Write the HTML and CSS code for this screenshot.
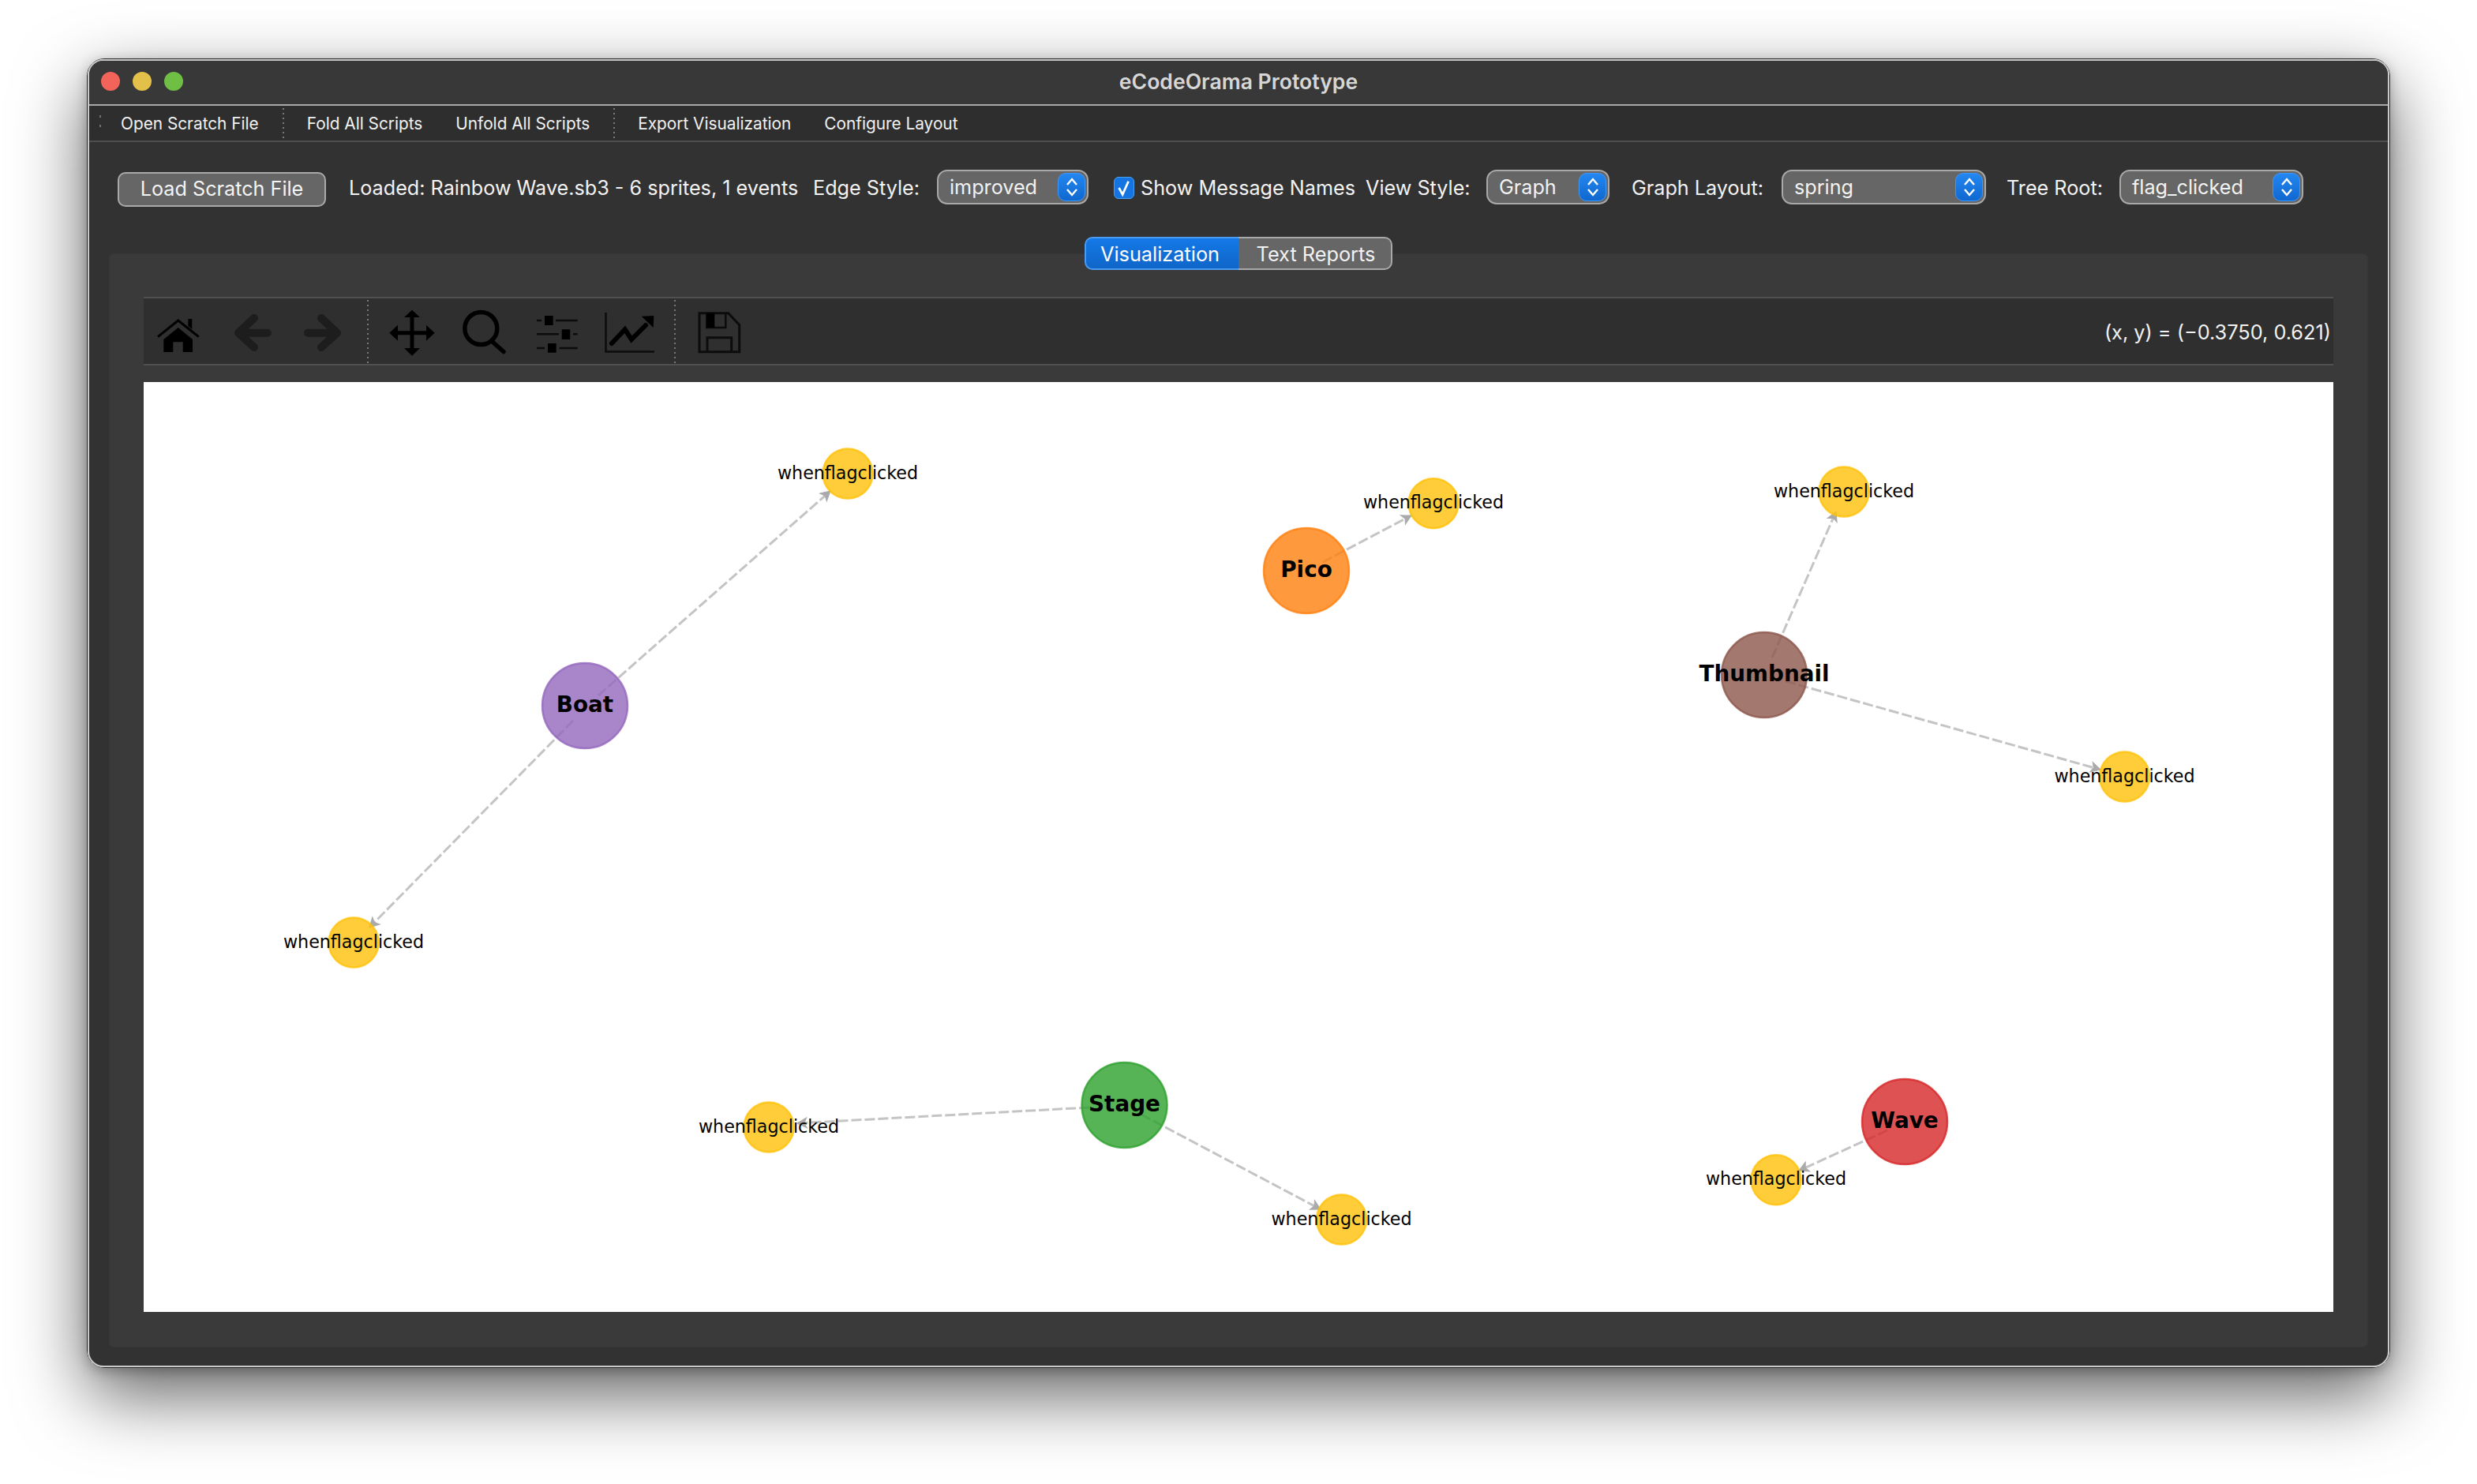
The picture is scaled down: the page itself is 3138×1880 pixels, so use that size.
FILE: index.html
```html
<!DOCTYPE html>
<html lang="en">
<head>
<meta charset="utf-8">
<title>eCodeOrama Prototype</title>
<link rel="stylesheet" href="styles.css">
</head>
<body>
<div class="window">
  <div class="frame">
    <header class="titlebar">
      <div class="lights"><i class="light red"></i><i class="light yellow"></i><i class="light green"></i></div>
      <div class="title">eCodeOrama Prototype</div>
    </header>
    <nav class="menubar">
      <span class="grip"></span>
      <span class="menu-item m-open">Open Scratch File</span>
      <span class="dots m-sep"></span>
      <span class="menu-item">Fold All Scripts</span>
      <span class="menu-item">Unfold All Scripts</span>
      <span class="dots m-sep"></span>
      <span class="menu-item">Export Visualization</span>
      <span class="menu-item">Configure Layout</span>
    </nav>
    <section class="controls">
      <button class="btn">Load Scratch File</button>
      <span class="lbl l-loaded">Loaded: Rainbow Wave.sb3 - 6 sprites, 1 events</span>
      <span class="lbl l-edge">Edge Style:</span>
      <div class="combo c-edge"><span>improved</span><b class="stepper"><svg viewBox="0 0 20 30"><path d="M4 12 10 5l6 7M4 18l6 7 6-7"/></svg></b></div>
      <span class="check"><svg viewBox="0 0 26 28"><path d="M6 14l5 9 8-18"/></svg></span>
      <span class="lbl l-show">Show Message Names</span>
      <span class="lbl l-view">View Style:</span>
      <div class="combo c-view"><span>Graph</span><b class="stepper"><svg viewBox="0 0 20 30"><path d="M4 12 10 5l6 7M4 18l6 7 6-7"/></svg></b></div>
      <span class="lbl l-layout">Graph Layout:</span>
      <div class="combo c-layout"><span>spring</span><b class="stepper"><svg viewBox="0 0 20 30"><path d="M4 12 10 5l6 7M4 18l6 7 6-7"/></svg></b></div>
      <span class="lbl l-root">Tree Root:</span>
      <div class="combo c-root"><span>flag_clicked</span><b class="stepper"><svg viewBox="0 0 20 30"><path d="M4 12 10 5l6 7M4 18l6 7 6-7"/></svg></b></div>
    </section>
    <main class="panel">
      <div class="tabs"><span class="tab active">Visualization</span><span class="tab">Text Reports</span></div>
      <div class="plot-toolbar">
        <svg class="ico i-home" viewBox="0 0 60 60"><path class="ln" d="M4 36.7 29.7 16l26 20.7"/><path d="M42.3 14h5v13l-5-4zM11.3 40 29.7 25 48 40v16H35.7V43.3H23.3V56H11.3z"/></svg>
        <svg class="ico dim i-back" viewBox="0 0 60 60"><path class="thick" d="M48.8 31.7H12M32 13 12 31.7 32 50"/></svg>
        <svg class="ico dim i-fwd" viewBox="0 0 60 60"><path class="thick" d="M11 31.7H48M28 13 48 31.7 28 50"/></svg>
        <span class="dots t-sep"></span>
        <svg class="ico i-move" viewBox="0 0 60 60"><path d="M27.5 12H32.5V29.2H48V21.7L58.7 31.7 48 41.7V34.2H32.5V51H40L30 60.7 20 51H27.5V34.2H12V41.7L1.3 31.7 12 21.7V29.2H27.5V12H20L30 2.7 40 12H27.5z"/></svg>
        <svg class="ico i-gap" viewBox="0 0 60 60"><circle class="ln w5" cx="25.3" cy="26" r="20.5"/><path class="ln w5" d="M41 44 54 55.5"/></svg>
        <svg class="ico i-gap" viewBox="0 0 60 60"><path class="ln w2" d="M4 16h6M28 16h27.7M4 33.3h28M50 33.3h5.7M4 51h10M32.5 51h23.2"/><path d="M14 10h10.7v12H14zM35.7 27.3h10.6V40H35.7zM18 45h10.7v11.7H18z"/></svg>
        <svg class="ico i-gap" viewBox="0 0 60 60"><path class="ln w2" d="M-.5 6V55.5H61"/><path class="ln w6" d="M7 45 23.7 27.3 32 40 50 22"/><path d="M60.3 10 44.7 10.7 59.7 25z"/></svg>
        <span class="dots t-sep"></span>
        <svg class="ico i-save" viewBox="0 0 60 60"><path class="ln w3" d="M5 6.7H41.7L55.7 21.7V55.7H5zM15 55.7V37.7H45.7V55.7"/><path class="ln w2" d="M14.3 6.7V25H38.3V6.7"/><path d="M14.3 6.7H24.3V25H14.3z"/></svg>
        <span class="coords">(x, y) = (−0.3750, 0.621)</span>
      </div>
      <div class="canvas">
        <svg class="graph" viewBox="181 484 2774 1178">
          <defs>
            <marker id="arrow" markerUnits="userSpaceOnUse" markerWidth="18" markerHeight="18" refX="15" refY="9" orient="auto">
              <path class="head" d="M3 2.5 15 9 3 15.5 6 9z"/>
            </marker>
          </defs>
          <g class="edges">
            <line x1="757" y1="881" x2="1051" y2="622"/>
            <line x1="725" y1="913" x2="467" y2="1175"/>
            <line x1="1675" y1="712" x2="1787" y2="653"/>
            <line x1="2244" y1="833" x2="2325" y2="648"/>
            <line x1="2261" y1="863" x2="2660" y2="975"/>
            <line x1="1379" y1="1403" x2="1009" y2="1423"/>
            <line x1="1445" y1="1412" x2="1672" y2="1532"/>
            <line x1="2390" y1="1432" x2="2278" y2="1483"/>
          </g>
          <circle class="node purple" cx="740" cy="894" r="54"/>
          <circle class="node orange" cx="1654" cy="723" r="54"/>
          <circle class="node brown" cx="2234" cy="855" r="54"/>
          <circle class="node green" cx="1423.5" cy="1400" r="54"/>
          <circle class="node red" cx="2412" cy="1421" r="54"/>
          <circle class="node event" cx="1073" cy="600" r="31.5"/>
          <circle class="node event" cx="447" cy="1194" r="31.5"/>
          <circle class="node event" cx="1815" cy="637.7" r="31.5"/>
          <circle class="node event" cx="2335" cy="623" r="31.5"/>
          <circle class="node event" cx="2690.5" cy="984" r="31.5"/>
          <circle class="node event" cx="973" cy="1428" r="31.5"/>
          <circle class="node event" cx="1698.5" cy="1545" r="31.5"/>
          <circle class="node event" cx="2249" cy="1494.7" r="31.5"/>
          <text class="big" x="740" y="902">Boat</text>
          <text class="big" x="1654" y="731">Pico</text>
          <text class="big" x="2234" y="863">Thumbnail</text>
          <text class="big" x="1423.5" y="1408">Stage</text>
          <text class="big" x="2412" y="1429">Wave</text>
          <text class="small" x="1073" y="606.5">whenflagclicked</text>
          <text class="small" x="447" y="1200.5">whenflagclicked</text>
          <text class="small" x="1815" y="644">whenflagclicked</text>
          <text class="small" x="2335" y="629.5">whenflagclicked</text>
          <text class="small" x="2690.5" y="990.5">whenflagclicked</text>
          <text class="small" x="973" y="1434.5">whenflagclicked</text>
          <text class="small" x="1698.5" y="1551.5">whenflagclicked</text>
          <text class="small" x="2249" y="1501.2">whenflagclicked</text>
        </svg>
      </div>
    </main>
  </div>
</div>
</body>
</html>
```
FILE: styles.css
```css
* { box-sizing: border-box; }
html, body { margin: 0; background: #fff; }
body {
  width: 3138px;
  height: 1880px;
  padding: 74px 110px 0;
  overflow: hidden;
  font-family: Inter, "Liberation Sans", sans-serif;
  color: #f2f2f2;
}
.window {
  width: 2918px;
  height: 1659px;
  border: 1px solid #2a2a2a;
  border-radius: 22px;
  box-shadow: 0 34px 90px rgba(0,0,0,.62), 0 4px 16px rgba(0,0,0,.25);
}
.frame {
  height: 100%;
  border: 2px solid #c9c9c9;
  border-radius: 20px;
  background: #323232;
  overflow: hidden;
}
.titlebar {
  height: 57px;
  background: #383838;
  border-bottom: 2px solid #a9a9a9;
  display: flex;
  align-items: center;
  justify-content: center;
  position: relative;
}
.lights {
  position: absolute;
  left: 15px;
  top: 14px;
  display: flex;
  gap: 16px;
}
.light { width: 24px; height: 24px; border-radius: 50%; display: block; }
.light.red { background: #f2635a; }
.light.yellow { background: #e3c04a; }
.light.green { background: #6fbf45; }
.title {
  font-size: 26.6px;
  font-weight: 600;
  color: #d6d6d6;
  position: relative;
  top: -2px;
}
.menubar {
  height: 46px;
  background: #2e2e2e;
  border-bottom: 2px solid #4e4e4e;
  display: flex;
  align-items: center;
  padding-left: 13px;
  font-size: 20.8px;
}
.grip {
  width: 2px;
  height: 20px;
  background: repeating-linear-gradient(#707070 0 3px, transparent 3px 12px);
}
.menu-item { margin-left: 42px; white-space: nowrap; }
.menu-item.m-open { margin-left: 25px; }
.dots {
  display: block;
  width: 2px;
  background: repeating-linear-gradient(#787878 0 2px, transparent 2px 6px);
}
.m-sep { height: 38px; margin-left: 30px; margin-right: -13px; }
.controls {
  height: 141px;
  padding: 35px 0 0 36px;
  display: flex;
  align-items: flex-start;
  font-size: 25.2px;
}
.btn {
  width: 264px;
  height: 44px;
  margin-top: 3px;
  padding: 0 0 3px;
  background: #666;
  border: 2px solid #a9a9a9;
  border-radius: 10px;
  color: #f4f4f4;
  font: inherit;
}
.lbl { line-height: 46px; white-space: nowrap; }
.l-loaded { margin-left: 29px; width: 570px; }
.l-edge { margin-left: 18px; width: 135px; }
.l-show { margin-left: 8px; width: 271px; }
.l-view { margin-left: 14px; width: 131px; }
.l-layout { margin-left: 28px; width: 167px; }
.l-root { margin-left: 26px; width: 121px; }
.combo {
  height: 44px;
  background: #666;
  border: 2px solid #a9a9a9;
  border-radius: 13px;
  padding: 0 2px 0 14px;
  display: flex;
  align-items: center;
  justify-content: space-between;
}
.combo span { line-height: 40px; }
.c-edge { margin-left: 22px; width: 192px; }
.c-view { margin-left: 22px; width: 156px; }
.c-layout { margin-left: 23px; width: 259px; }
.c-root { margin-left: 22px; width: 233px; }
.stepper {
  width: 35px;
  height: 36px;
  border-radius: 10px;
  background: linear-gradient(#2486f0, #0f68cf);
  border: 1px solid #3f97f5;
  display: flex;
  align-items: center;
  justify-content: center;
}
.stepper svg { width: 20px; height: 30px; fill: none; stroke: #fff; stroke-width: 2.4; }
.check {
  width: 26px;
  height: 28px;
  margin: 9px 0 0 32px;
  border-radius: 6px;
  background: #1475e2;
  border: 1px solid #4aa0f7;
  display: block;
}
.check svg { display: block; width: 24px; height: 26px; fill: none; stroke: #fff; stroke-width: 3; }
.panel {
  width: 2862px;
  height: 1386px;
  margin-left: 25px;
  background: #3a3a3a;
  border: 1px solid #363636;
  border-radius: 6px;
  padding: 0 43px;
}
.tabs {
  display: flex;
  justify-content: center;
  margin-top: -22px;
  height: 42px;
  font-size: 25.3px;
}
.tab {
  width: 195px;
  height: 42px;
  padding-left: 3px;
  background: #666;
  border: 2px solid #a9a9a9;
  border-left: 0;
  border-radius: 0 10px 10px 0;
  display: flex;
  align-items: center;
  justify-content: center;
}
.tab.active {
  padding: 0 6px 0 0;
  background: linear-gradient(#1479e8, #0f66c8);
  border: 2px solid #4b9bf0;
  border-right: 0;
  border-radius: 10px 0 0 10px;
  color: #fff;
}
.plot-toolbar {
  height: 87px;
  margin-top: 34px;
  background: #2f2f2f;
  border-top: 2px solid #505050;
  border-bottom: 2px solid #505050;
  display: flex;
  align-items: center;
  padding: 0 3px 0 14px;
}
.ico { width: 60px; height: 60px; flex: none; overflow: visible; fill: #000; }
.ico.dim { fill: none; }
.i-back { margin-left: 33.5px; }
.i-fwd { margin-left: 29px; }
.i-move { margin-left: 25px; }
.i-gap { margin-left: 32px; }
.i-save { margin-left: 25px; }
.t-sep { height: 80px; margin-left: 26px; }
.ln { fill: none; stroke: #000; stroke-width: 3; }
.ln.w2 { stroke-width: 2.5; stroke: #0c0c0c; }
.ln.w3 { stroke-width: 3; stroke: #0c0c0c; }
.ln.w5 { stroke-width: 5.5; stroke-linecap: round; }
.ln.w6 { stroke-width: 6; stroke-linecap: round; stroke-linejoin: miter; }
.thick { fill: none; stroke: #1d1d1d; stroke-width: 10; stroke-linecap: round; stroke-linejoin: round; }
.coords { margin-left: auto; padding-top: 2px; font-size: 25.3px; white-space: nowrap; }
.canvas {
  margin-top: 21px;
  height: 1178px;
  background: #fff;
}
.graph { display: block; width: 2774px; height: 1178px; }
.edges line {
  stroke: #999;
  stroke-opacity: .58;
  stroke-width: 3;
  stroke-dasharray: 13 4;
  marker-end: url(#arrow);
}
.head { fill: #aaa; stroke: #aaa; stroke-width: 1; }
.node { stroke-width: 2.5; fill-opacity: .8; stroke-opacity: .8; }
.purple { fill: #9467bd; stroke: #9467bd; }
.orange { fill: #ff7f0e; stroke: #ff7f0e; }
.brown { fill: #8c564b; stroke: #8c564b; }
.green { fill: #2ca02c; stroke: #2ca02c; }
.red { fill: #d62728; stroke: #d62728; }
.event { fill: #ffc107; stroke: #ffc107; }
.graph text { text-anchor: middle; fill: #000; font-family: "DejaVu Sans", sans-serif; }
.big { font-size: 27.8px; font-weight: 700; }
.small { font-size: 22.2px; }
```
